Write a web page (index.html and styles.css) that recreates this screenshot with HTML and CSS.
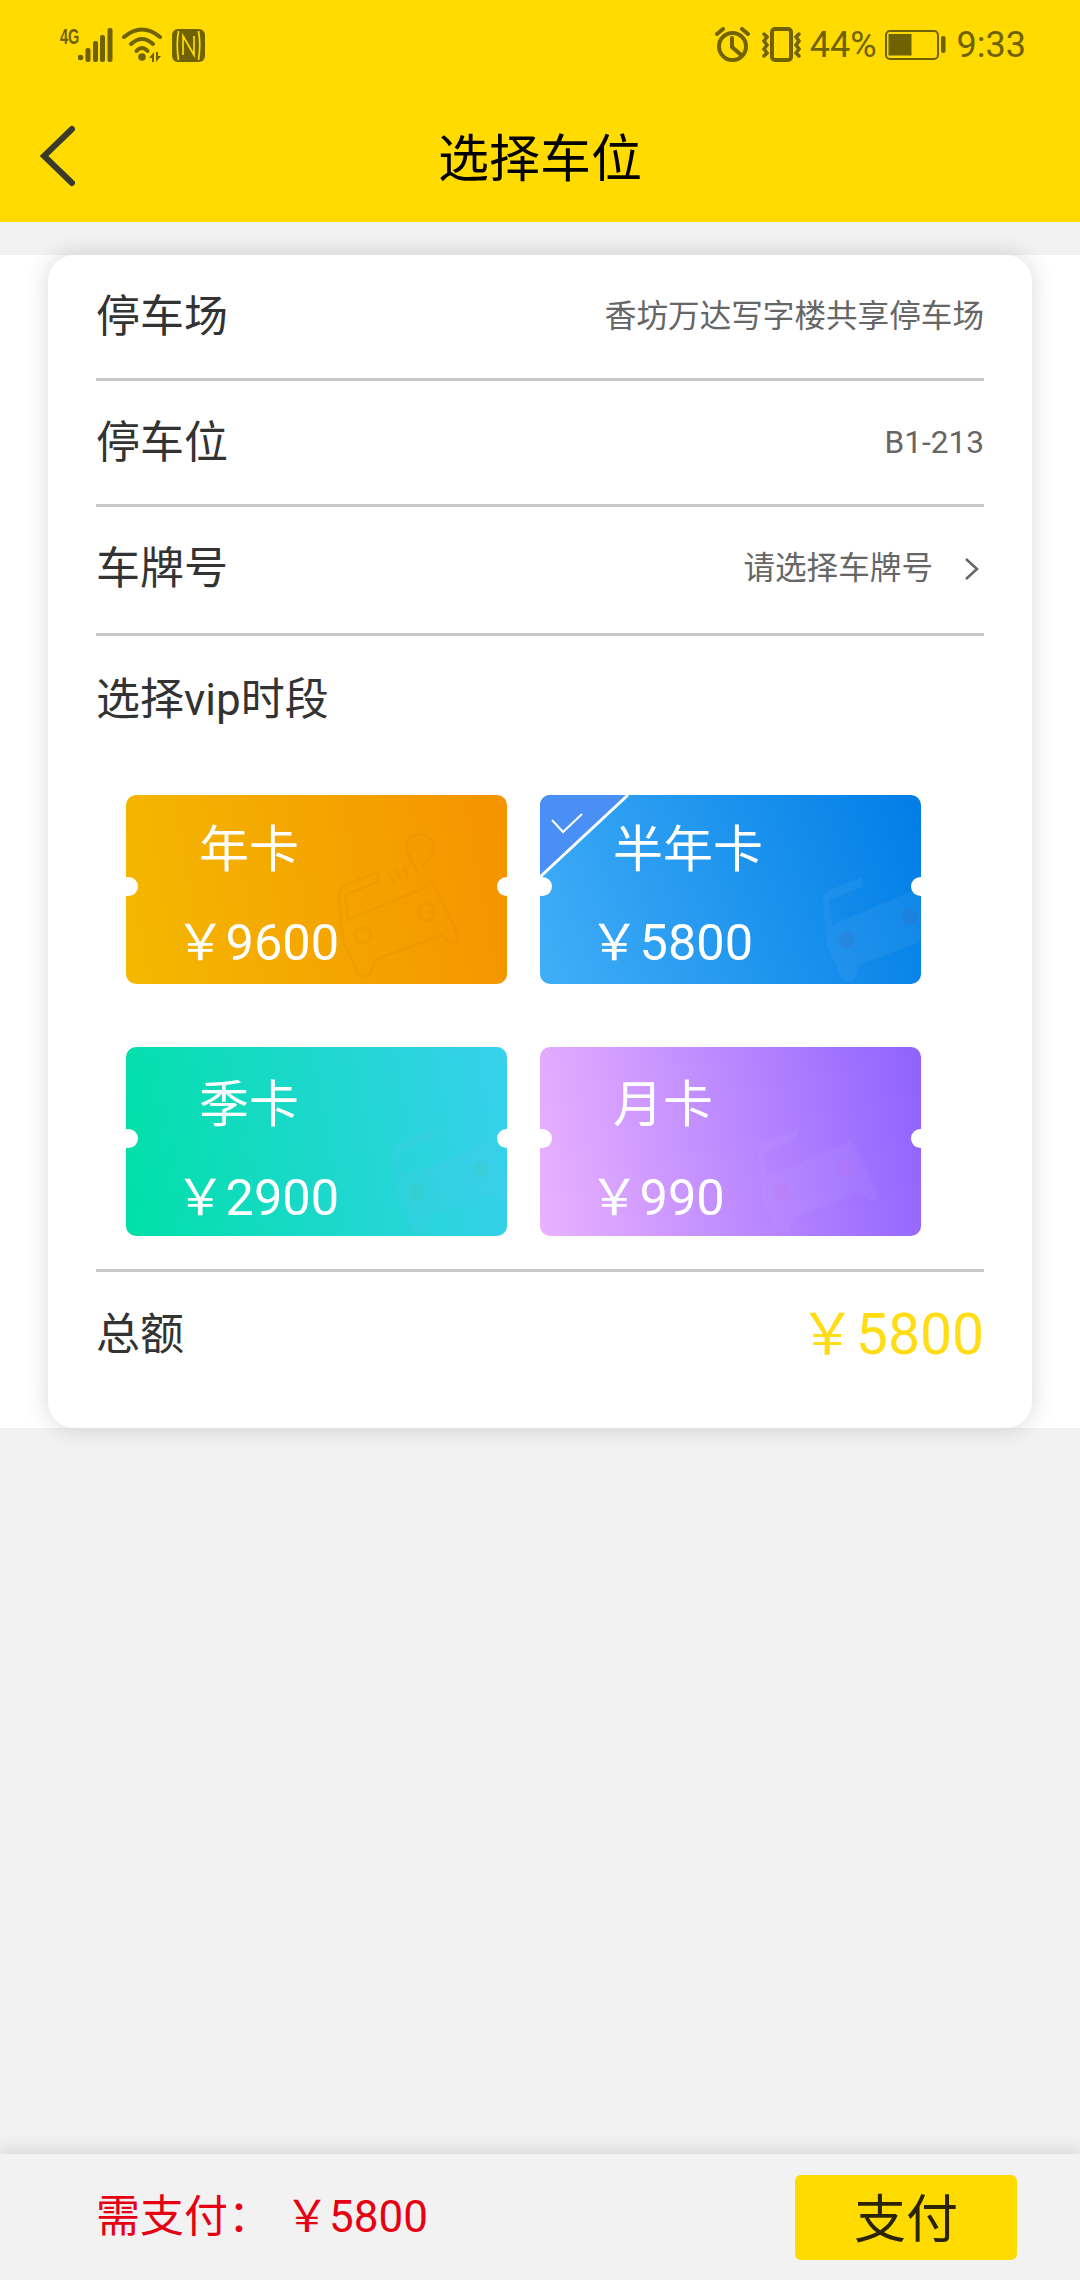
FILE: index.html
```html
<!DOCTYPE html>
<html lang="zh-CN">
<head>
    <meta charset="UTF-8">
    <meta name="viewport" content="width=device-width, initial-scale=1.0">
    <title>选择车位</title>
    <link rel="stylesheet" href="styles.css">
</head>
<body>
    <svg class="defs" width="0" height="0">
        <symbol id="car" viewBox="0 0 140 160">
            <path class="car-body" d="M48 47 L16 60 Q9 63 9 72 L13 116 L28 148 Q33 154 40 150 L45 135 L112 110 L120 118 Q128 120 128 110 L106 64 L100 55 L96 62 L18 95 L15 70 L48 57 Z"/>
            <circle class="car-wheel" cx="33" cy="110" r="8"/>
            <circle class="car-wheel" cx="96" cy="87" r="8"/>
            <path class="car-pin" d="M88 48 L76 25 A14 14 0 1 1 97 35 L92 42 M58 47 L64 58 M66 45 L71 55 M74 42 L78 52"/>
        </symbol>
    </svg>

    <div class="page">
        <header class="topbar">
            <div class="statusbar">
                <div class="status-left">
                    <span class="net-label">4G</span>
                    <svg width="128" height="36" viewBox="78 27 128 36">
                        <circle cx="80.500" cy="57.500" r="2.800"/>
                        <rect x="85.500" y="48" width="5" height="14" rx="2"/>
                        <rect x="93" y="41" width="5" height="21" rx="2"/>
                        <rect x="100" y="35" width="5" height="27" rx="2"/>
                        <rect x="107.500" y="28" width="5" height="34" rx="2"/>
                        <g class="stroke-icon">
                            <path d="M124 37 Q142 22 160 37"/>
                            <path d="M131 44 Q142 34 153 44"/>
                            <path d="M136.500 51 Q142 45 147.500 51"/>
                        </g>
                        <circle cx="142" cy="57" r="3.800"/>
                        <path d="M154 52 V62 H152 V58 H149 Z M156 52 H158 V56 H161 L156 62 Z"/>
                        <rect x="172" y="29" width="33" height="33" rx="6"/>
                        <path class="nfc-cut" d="M178.500 31 Q176 45 178.500 60 M198.500 31 Q201 45 198.500 60 M183 55 V36 L194 55 V36"/>
                    </svg>
                </div>
                <div class="status-right">
                    <svg class="alarm" width="36" height="36" viewBox="716 28 36 36">
                        <g class="stroke-icon">
                            <circle cx="733.500" cy="47.500" r="13.500"/>
                            <path d="M733 39 V48 L741 55"/>
                            <path d="M718 35 L724 30 M749 35 L743 30"/>
                        </g>
                    </svg>
                    <svg width="42" height="36" viewBox="762 28 42 36">
                        <g class="stroke-icon">
                            <rect x="773" y="30" width="19" height="31" rx="3"/>
                            <path class="thin" d="M765 35 L768 38 L765 42 L768 46 L765 50 L768 54 L765 57"/>
                            <path class="thin" d="M800 35 L797 38 L800 42 L797 46 L800 50 L797 54 L800 57"/>
                        </g>
                    </svg>
                    <span class="status-text pct">44%</span>
                    <svg class="battery" width="62" height="32" viewBox="886 30 62 32">
                        <rect class="battery-case" x="887" y="32" width="52" height="28" rx="4"/>
                        <rect x="889.500" y="35" width="23" height="21.500"/>
                        <rect x="942" y="37" width="4.500" height="17" rx="2"/>
                    </svg>
                    <span class="status-text time">9:33</span>
                </div>
            </div>
            <nav class="navbar">
                <svg class="back" width="36" height="62" viewBox="40 125 36 62">
                    <path d="M72 129 L44 156 L72 183"/>
                </svg>
                <h1 class="title">选择车位</h1>
            </nav>
        </header>

        <main class="band">
            <section class="card">
                <div class="row">
                    <span class="label">停车场</span>
                    <span class="value">香坊万达写字楼共享停车场</span>
                </div>
                <div class="row">
                    <span class="label">停车位</span>
                    <span class="value">B1-213</span>
                </div>
                <div class="row row-plate">
                    <span class="label">车牌号</span>
                    <span class="value">请选择车牌号
                        <svg class="chevron" width="16" height="22" viewBox="0 0 16 22"><path d="M2 1 L13 11 L2 21"/></svg>
                    </span>
                </div>

                <h2 class="section-label">选择vip时段</h2>

                <div class="tickets">
                    <div class="ticket ticket-year">
                        <svg class="ticket-car"><use href="#car"/></svg>
                        <div class="ticket-name">年卡</div>
                        <div class="ticket-price"><span class="yen">&#xFFE5;</span>9600</div>
                    </div>
                    <div class="ticket ticket-half">
                        <svg class="ticket-car"><use href="#car"/></svg>
                        <svg class="ticket-check" width="90" height="84" viewBox="0 0 90 84">
                            <path class="check-bg" d="M0 0 H88 L0 82 Z"/>
                            <path class="check-edge" d="M88 0 L0 82"/>
                            <path class="check-mark" d="M12 25 L23 37 L42 19"/>
                        </svg>
                        <div class="ticket-name">半年卡</div>
                        <div class="ticket-price"><span class="yen">&#xFFE5;</span>5800</div>
                    </div>
                    <div class="ticket ticket-season">
                        <svg class="ticket-car"><use href="#car"/></svg>
                        <div class="ticket-name">季卡</div>
                        <div class="ticket-price"><span class="yen">&#xFFE5;</span>2900</div>
                    </div>
                    <div class="ticket ticket-month">
                        <svg class="ticket-car"><use href="#car"/></svg>
                        <div class="ticket-name">月卡</div>
                        <div class="ticket-price"><span class="yen">&#xFFE5;</span>990</div>
                    </div>
                </div>

                <div class="total">
                    <span class="label">总额</span>
                    <span class="total-price"><span class="yen">&#xFFE5;</span>5800</span>
                </div>
            </section>
        </main>

        <footer class="paybar">
            <div class="pay-text">需支付：<span class="yen pay-yen">&#xFFE5;</span>5800</div>
            <button class="pay-button">支付</button>
        </footer>
    </div>
</body>
</html>
```

FILE: styles.css
```css
* {
    box-sizing: border-box;
}
html, body {
    margin: 0;
    padding: 0;
}
body {
    font-family: Roboto, "Noto Sans CJK SC", sans-serif;
    background-color: #f2f2f2;
    color: #333;
}
.defs {
    display: block;
    height: 0;
}
.page {
    width: 1080px;
    height: 2280px;
    display: flex;
    flex-direction: column;
    overflow: hidden;
}
.yen {
    font-family: "Noto Sans CJK SC", sans-serif;
    line-height: 0;
}

/* top */
.topbar {
    height: 222px;
    background-color: #ffdb00;
}
.statusbar {
    height: 90px;
    display: flex;
    justify-content: space-between;
    align-items: center;
    padding: 0 54px 0 60px;
    color: #716200;
    fill: #716200;
}
.status-left {
    display: flex;
    align-items: flex-start;
}
.status-right {
    display: flex;
    align-items: center;
}
.stroke-icon {
    fill: none;
    stroke: #716200;
    stroke-width: 4;
    stroke-linecap: round;
}
.stroke-icon .thin {
    stroke-width: 3.500;
}
.net-label {
    font-family: "Liberation Sans", sans-serif;
    font-size: 22px;
    font-weight: bold;
    line-height: 20px;
    width: 18px;
    white-space: nowrap;
    transform: scaleX(0.66);
    transform-origin: left top;
}
.nfc-cut {
    fill: none;
    stroke: #ffdb00;
    stroke-width: 1.700;
}
.alarm {
    margin-right: 10px;
}
.status-text {
    font-size: 36px;
    line-height: 40px;
}
.pct {
    margin: 0 8px 0 7px;
}
.battery-case {
    fill: none;
    stroke: #716200;
    stroke-width: 2;
}
.time {
    margin-left: 10px;
}
.navbar {
    height: 132px;
    position: relative;
    display: flex;
    justify-content: center;
    align-items: center;
}
.back {
    position: absolute;
    left: 40px;
    top: 35px;
}
.back path {
    fill: none;
    stroke: #3a3a2a;
    stroke-width: 6;
    stroke-linecap: round;
}
.title {
    margin: 0;
    font-size: 51px;
    font-weight: 400;
    line-height: 60px;
    color: #000;
    padding-top: 8px;
}

/* card */
.band {
    margin-top: 33px;
    height: 1173px;
    background-color: #fff;
    padding: 0 48px;
}
.card {
    height: 100%;
    background-color: #fff;
    border-radius: 26px;
    box-shadow: 0 0 24px rgba(0, 0, 0, 0.16);
    padding: 0 48px;
}
.row {
    height: 126px;
    display: flex;
    justify-content: space-between;
    align-items: center;
    border-bottom: 3px solid #c8c8c8;
}
.row-plate {
    height: 129px;
    padding-bottom: 3px;
}
.label {
    font-size: 44px;
    line-height: 60px;
    color: #333;
}
.value {
    font-size: 31.600px;
    line-height: 44px;
    color: #666;
    display: flex;
    align-items: center;
}
.chevron {
    margin-left: 31px;
    margin-right: 4px;
}
.chevron path {
    fill: none;
    stroke: #666;
    stroke-width: 2.500;
}
.section-label {
    margin: 0;
    padding-top: 34px;
    font-size: 44px;
    font-weight: 400;
    line-height: 60px;
    height: 159px;
}

/* tickets */
.tickets {
    display: grid;
    grid-template-columns: 381px 381px;
    grid-auto-rows: 189px;
    column-gap: 33px;
    row-gap: 63px;
    padding-left: 30px;
    padding-bottom: 33px;
    border-bottom: 3px solid #c8c8c8;
}
.ticket {
    position: relative;
    overflow: hidden;
    border-radius: 10px;
    padding: 25px 0 0 49px;
    color: #fff;
    --car-fill: none;
    --car-line: none;
    --car-wheel: none;
}
.ticket::before,
.ticket::after {
    content: "";
    position: absolute;
    top: 82px;
    width: 19px;
    height: 19px;
    border-radius: 50%;
    background-color: #fff;
}
.ticket::before {
    left: -7px;
}
.ticket::after {
    right: -9px;
}
.ticket-year {
    background: linear-gradient(80deg, #f4b800, #f59300);
    --car-line: rgba(205, 120, 0, 0.14);
}
.ticket-half {
    background: linear-gradient(70deg, #41aef7, #007de6);
    --car-fill: rgba(255, 255, 255, 0.05);
    --car-wheel: rgba(60, 110, 170, 0.2);
}
.ticket-season {
    background: linear-gradient(80deg, #00e0a8, #38d0ee);
    --car-fill: rgba(80, 200, 240, 0.2);
    --car-wheel: rgba(60, 200, 170, 0.25);
}
.ticket-season,
.ticket-month {
    padding-top: 28px;
}
.ticket-month {
    background: linear-gradient(80deg, #eab2ff, #8f62ff);
    --car-fill: rgba(255, 255, 255, 0.04);
    --car-wheel: rgba(200, 110, 220, 0.16);
}
.ticket-car {
    position: absolute;
    top: 35px;
    width: 140px;
    height: 160px;
}
.ticket-year .ticket-car {
    left: 204px;
    top: 30px;
}
.ticket-half .ticket-car {
    left: 274px;
}
.ticket-season .ticket-car {
    left: 259px;
}
.ticket-month .ticket-car {
    left: 209px;
}
.car-body {
    fill: var(--car-fill);
    stroke: var(--car-line);
    stroke-width: 2.500;
}
.car-wheel {
    fill: var(--car-wheel);
    stroke: var(--car-line);
    stroke-width: 2.500;
}
.car-pin {
    fill: none;
    stroke: var(--car-line);
    stroke-width: 2.500;
}
.ticket-check {
    position: absolute;
    left: 0;
    top: 0;
}
.check-bg {
    fill: #4a8ff5;
}
.check-edge {
    fill: none;
    stroke: #fff;
    stroke-width: 3;
}
.check-mark {
    fill: none;
    stroke: #fff;
    stroke-width: 2;
}
.ticket-name {
    position: relative;
    padding-left: 24px;
    font-size: 50px;
    line-height: 60px;
}
.ticket-price {
    position: relative;
    margin-top: 33px;
    font-size: 50.500px;
    line-height: 60px;
}

/* total */
.total {
    display: flex;
    justify-content: space-between;
    align-items: center;
    padding-top: 33px;
}
.total-price {
    font-size: 57px;
    line-height: 60px;
    color: #ffdc14;
}

/* bottom */
.paybar {
    margin-top: auto;
    height: 126px;
    display: flex;
    justify-content: space-between;
    align-items: center;
    padding: 0 63px 0 96px;
    background-color: #f3f2f2;
    box-shadow: 0 -6px 16px rgba(0, 0, 0, 0.1);
    position: relative;
}
.pay-text {
    font-size: 44px;
    line-height: 60px;
    color: #e60012;
}
.pay-yen {
    margin-left: 13px;
}
.pay-button {
    width: 222px;
    height: 85px;
    padding: 0 0 4px;
    border: none;
    border-radius: 6px;
    background-color: #ffdb00;
    color: #2a2500;
    font-family: Roboto, "Noto Sans CJK SC", sans-serif;
    font-size: 52px;
}
```
